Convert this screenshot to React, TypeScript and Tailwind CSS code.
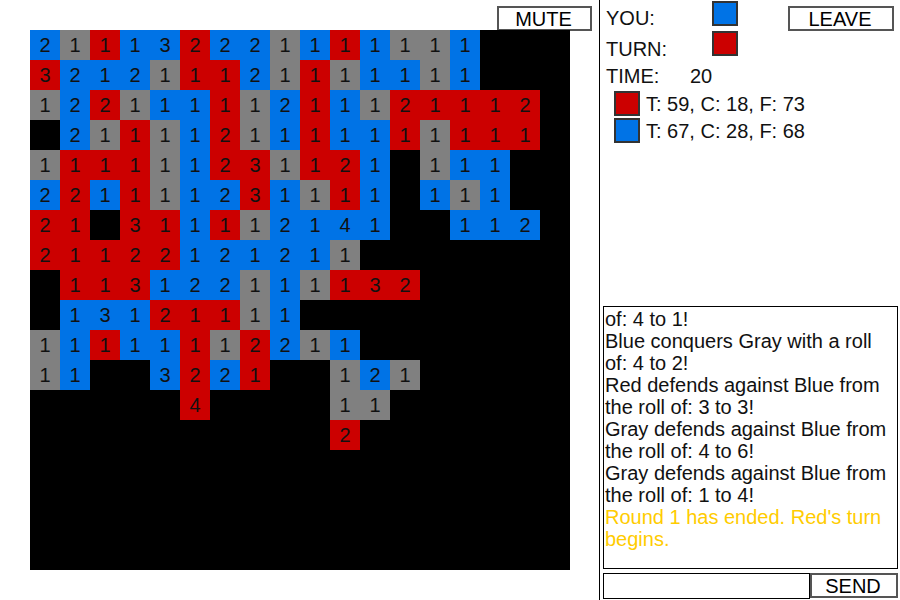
const cellClass = {
  b: 'bg-[#0073e6]',
  r: 'bg-[#cc0000]',
  g: 'bg-[#808080]',
  _: 'bg-black',
}

type Team = keyof typeof cellClass

// each cell: number + team, ".." for an empty one
const board = [
  '2b 1g 1r 1b 3b 2r 2b 2b 1g 1b 1r 1b 1g 1g 1b .. .. ..',
  '3r 2b 1b 2b 1g 1r 1r 2b 1g 1r 1g 1b 1b 1g 1b .. .. ..',
  '1g 2b 2r 1g 1b 1b 1r 1g 2b 1r 1b 1g 2r 1r 1r 1r 2r ..',
  '.. 2b 1g 1r 1g 1b 2r 1g 1b 1r 1b 1b 1r 1g 1r 1r 1r ..',
  '1g 1r 1r 1r 1g 1b 2r 3r 1g 1r 2r 1b .. 1g 1b 1b .. ..',
  '2b 2r 1b 1r 1g 1b 2b 3r 1b 1g 1r 1b .. 1b 1g 1b .. ..',
  '2r 1r .. 3r 1r 1b 1r 1g 2b 1b 4b 1b .. .. 1b 1b 2b ..',
  '2r 1r 1r 2r 2r 1b 2b 1b 2b 1b 1g .. .. .. .. .. .. ..',
  '.. 1r 1r 3r 1b 2b 2b 1g 1b 1g 1r 3r 2r .. .. .. .. ..',
  '.. 1b 3b 1b 2r 1r 1r 1g 1b .. .. .. .. .. .. .. .. ..',
  '1g 1b 1r 1b 1b 1r 1g 2r 2b 1g 1b .. .. .. .. .. .. ..',
  '1g 1b .. .. 3b 2r 2b 1r .. .. 1g 2b 1g .. .. .. .. ..',
  '.. .. .. .. .. 4r .. .. .. .. 1g 1g .. .. .. .. .. ..',
  '.. .. .. .. .. .. .. .. .. .. 2r .. .. .. .. .. .. ..',
  '.. .. .. .. .. .. .. .. .. .. .. .. .. .. .. .. .. ..',
  '.. .. .. .. .. .. .. .. .. .. .. .. .. .. .. .. .. ..',
  '.. .. .. .. .. .. .. .. .. .. .. .. .. .. .. .. .. ..',
  '.. .. .. .. .. .. .. .. .. .. .. .. .. .. .. .. .. ..',
]

const log = [
  'of: 4 to 1!',
  'Blue conquers Gray with a roll of: 4 to 2!',
  'Red defends against Blue from the roll of: 3 to 3!',
  'Gray defends against Blue from the roll of: 4 to 6!',
  'Gray defends against Blue from the roll of: 1 to 4!',
]

const btnClass = 'border-2 border-[#555] bg-white pr-[2px] text-center text-[20px] leading-[20px] text-black'
const swatchClass = 'box-border h-[25px] w-[26px] border-2 border-[#333]'

function Cell({ value }: { value: string }) {
  const empty = value === '..'
  const team = (empty ? '_' : value[1]) as Team
  return (
    <div className={`flex h-[30px] w-[30px] items-center justify-center text-[20px] leading-none text-[#111] ${cellClass[team]}`}>
      {empty ? '' : value[0]}
    </div>
  )
}

export default function App() {
  return (
    <div className="flex h-[600px] w-[900px] overflow-hidden bg-white font-['Liberation_Sans',Arial,sans-serif] text-[20px] text-[#111]">
      {/* board side */}
      <div className="box-border w-[600px] shrink-0 border-r border-black">
        <div className="flex h-[30px] justify-end pr-[7px] pt-[6px]">
          <button className={`${btnClass} h-[25px] w-[95px]`}>MUTE</button>
        </div>
        <div className="relative ml-[30px] grid w-[540px] grid-cols-[repeat(18,30px)]">
          {board.flatMap((row, y) =>
            row.split(' ').map((value, x) => <Cell key={`${y}-${x}`} value={value} />),
          )}
        </div>
      </div>

      {/* info side */}
      <div className="flex min-w-0 flex-1 flex-col pl-[3px]">
        <div className="h-[306px]">
          <div className="flex h-[30px] items-start">
            <div className="w-[109px] pl-[3px] pt-[7px] leading-[23px]">YOU:</div>
            <div className={`${swatchClass} mt-[1px] bg-[#0073e6]`} />
            <button className={`${btnClass} ml-[50px] mt-[6px] h-[25px] w-[106px]`}>LEAVE</button>
          </div>
          <div className="flex h-[30px] items-start">
            <div className="w-[109px] pl-[3px] pt-[8px] leading-[23px]">TURN:</div>
            <div className={`${swatchClass} mt-[1px] bg-[#cc0000]`} />
          </div>
          <div className="flex h-[31px] items-center pl-[3px]">
            <span className="w-[84px]">TIME:</span>
            <span>20</span>
          </div>
          <div className="mb-[2px] flex h-[25px] items-center gap-[6px] pl-[11px]">
            <div className={`${swatchClass} bg-[#cc0000]`} />
            <span className="pt-[1px]">T: 59, C: 18, F: 73</span>
          </div>
          <div className="flex h-[25px] items-center gap-[6px] pl-[11px]">
            <div className={`${swatchClass} bg-[#0073e6]`} />
            <span className="pt-[1px]">T: 67, C: 28, F: 68</span>
          </div>
        </div>

        <div className="h-[263px] w-[295px] overflow-hidden border border-black pl-[1px] pt-[1px] leading-[22px]">
          {log.map((line) => (
            <div key={line}>{line}</div>
          ))}
          <div className="text-[#ffcc00]">Round 1 has ended. Red's turn begins.</div>
        </div>

        <div className="mt-[4px] flex h-[26px] w-[295px]">
          <input className="h-[26px] w-[207px] border border-black bg-white outline-none" />
          <button className={`${btnClass} h-[25px] w-[88px]`}>SEND</button>
        </div>
      </div>
    </div>
  )
}
